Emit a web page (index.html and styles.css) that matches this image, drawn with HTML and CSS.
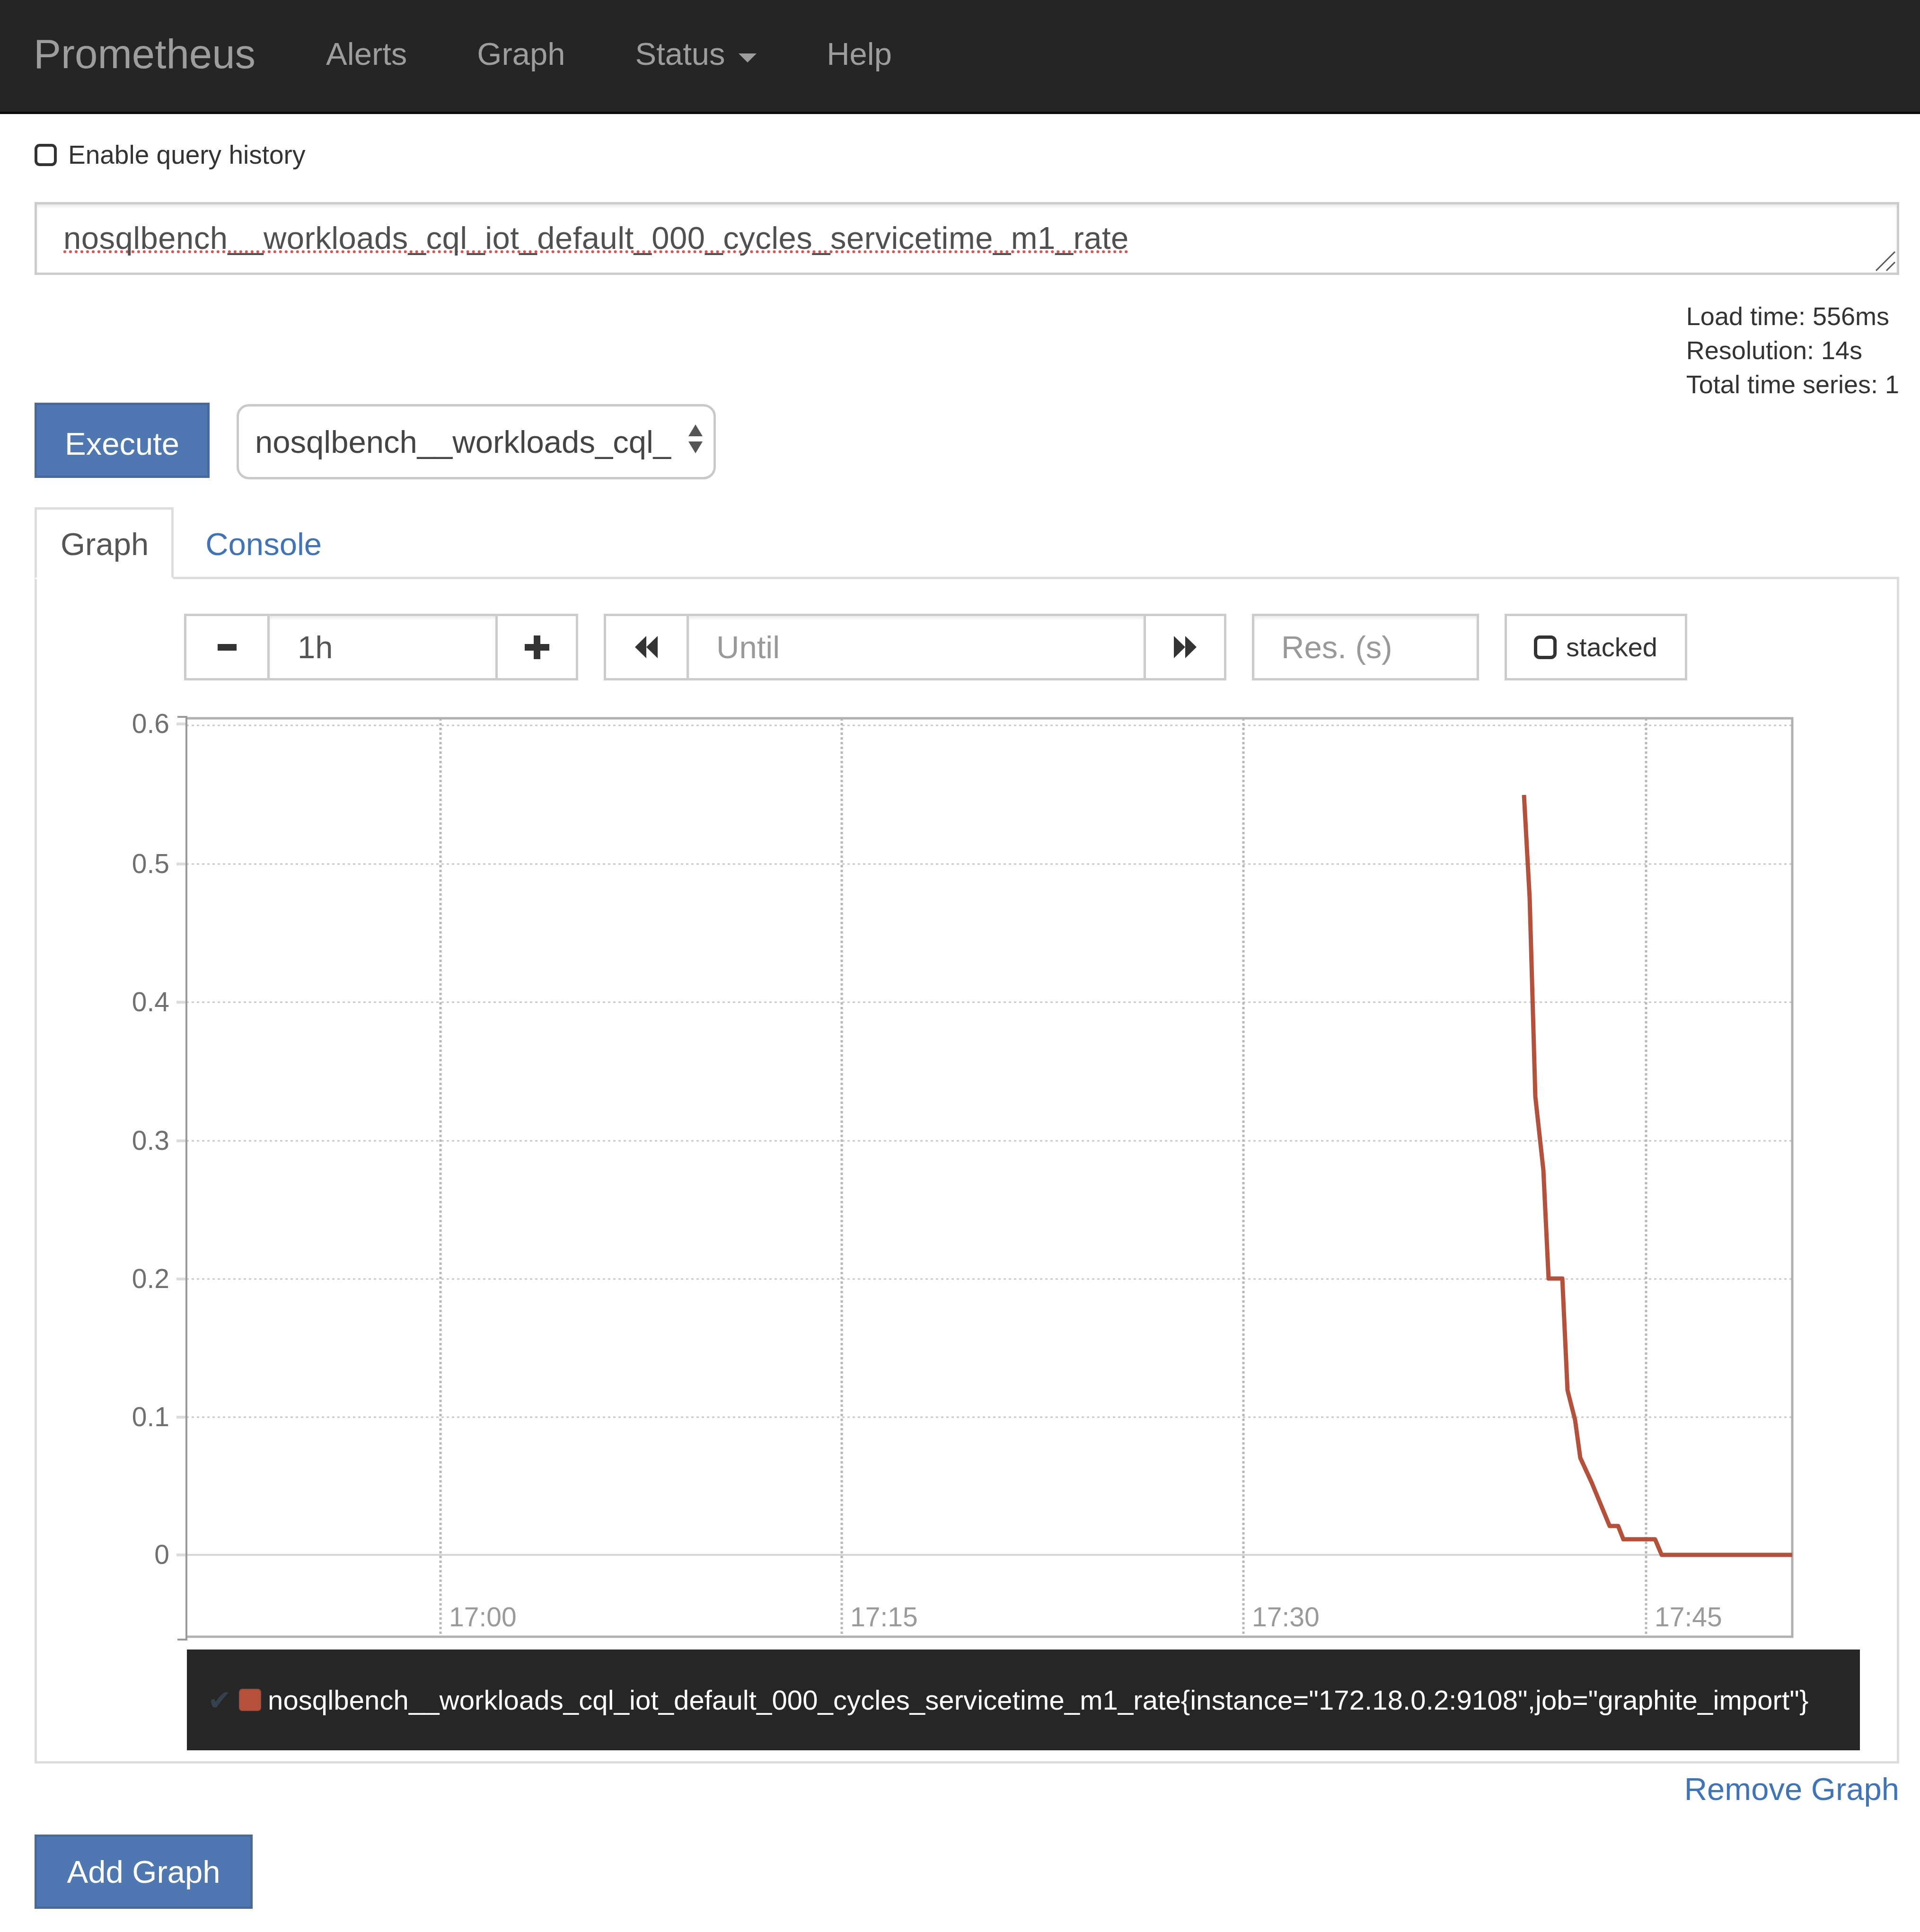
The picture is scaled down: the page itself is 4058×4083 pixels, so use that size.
FILE: index.html
```html
<!DOCTYPE html>
<html lang="en">
<head>
<meta charset="utf-8">
<title>Prometheus Time Series Collection and Processing Server</title>
<link rel="stylesheet" href="styles.css">
</head>
<body>
<nav class="navbar">
  <a class="brand">Prometheus</a>
  <ul class="nav">
    <li><a>Alerts</a></li>
    <li><a>Graph</a></li>
    <li><a>Status <span class="caret"></span></a></li>
    <li><a>Help</a></li>
  </ul>
</nav>
<main class="container">
  <label class="history"><span class="checkbox"></span>Enable query history</label>
  <div class="expr">
    <span class="spell">nosqlbench__workloads_cql_iot_default_000_cycles_servicetime_m1_rate</span>
    <svg class="resize-handle" width="48" height="48" viewBox="0 0 48 48"><path d="M6 46 L46 6 M28 46 L46 28" stroke="#555" stroke-width="3" fill="none"/></svg>
  </div>
  <div class="eval-stats">Load time: 556ms<br>Resolution: 14s<br>Total time series: 1</div>
  <div class="exec-row">
    <button class="btn-primary execute">Execute</button>
    <div class="select">
      <span>nosqlbench__workloads_cql_</span>
      <svg class="select-arrows" width="30" height="61" viewBox="0 0 30 61"><path d="M0 25 L15 0 L30 25 Z M0 36 L30 36 L15 61 Z" fill="#555"/></svg>
    </div>
  </div>
  <div class="tabs">
    <div class="tab active">Graph</div>
    <div class="tab">Console</div>
  </div>
  <div class="tab-panel">
    <div class="controls">
      <div class="group range">
        <div class="gbtn first"><svg width="40" height="14" viewBox="0 0 40 14"><rect width="40" height="14" fill="#333"/></svg></div>
        <div class="gin range-in">1h</div>
        <div class="gbtn"><svg width="52" height="50" viewBox="0 0 52 50"><rect x="19" y="0" width="14" height="50" fill="#333"/><rect x="0" y="18" width="52" height="14" fill="#333"/></svg></div>
      </div>
      <div class="group time">
        <div class="gbtn first"><svg width="48" height="47" viewBox="0 0 48 47"><path d="M0 23.5 L24 0 L24 47 Z M24 23.5 L48 0 L48 47 Z" fill="#333"/></svg></div>
        <div class="gin time-in placeholder">Until</div>
        <div class="gbtn"><svg width="48" height="47" viewBox="0 0 48 47"><path d="M48 23.5 L24 0 L24 47 Z M24 23.5 L0 0 L0 47 Z" fill="#333"/></svg></div>
      </div>
      <div class="res placeholder">Res. (s)</div>
      <div class="stacked"><span class="unchecked"></span>stacked</div>
    </div>
    <svg class="chart" width="3600" height="1985" viewBox="-100 0 3600 1985">
      <g stroke="#c8c8c8" stroke-width="3" stroke-dasharray="5 6">
        <line x1="94" x2="3488" y1="43" y2="43"/>
        <line x1="94" x2="3488" y1="336" y2="336"/>
        <line x1="94" x2="3488" y1="628" y2="628"/>
        <line x1="94" x2="3488" y1="921" y2="921"/>
        <line x1="94" x2="3488" y1="1213" y2="1213"/>
        <line x1="94" x2="3488" y1="1505" y2="1505"/>
      </g>
      <line x1="94" x2="3488" y1="1796" y2="1796" stroke="#d6d6d6" stroke-width="4"/>
      <g stroke="#b8b8b8" stroke-width="5" stroke-dasharray="5 5">
        <line x1="631" x2="631" y1="28" y2="1969"/>
        <line x1="1479" x2="1479" y1="28" y2="1969"/>
        <line x1="2328" x2="2328" y1="28" y2="1969"/>
        <line x1="3179" x2="3179" y1="28" y2="1969"/>
      </g>
      <g stroke="#dcdcdc" stroke-width="6">
        <line x1="73" x2="94" y1="40" y2="40"/>
        <line x1="73" x2="94" y1="336" y2="336"/>
        <line x1="73" x2="94" y1="628" y2="628"/>
        <line x1="73" x2="94" y1="921" y2="921"/>
        <line x1="73" x2="94" y1="1213" y2="1213"/>
        <line x1="73" x2="94" y1="1505" y2="1505"/>
        <line x1="73" x2="94" y1="1796" y2="1796"/>
      </g>
      <path d="M94 28 H3488 V1969 H94" stroke="#b0b0b0" stroke-width="5" fill="none"/>
      <path d="M75 25 H94 V1975 H75" stroke="#999" stroke-width="4" fill="none"/>
      <polyline fill="none" stroke="#b5503a" stroke-width="9" stroke-linejoin="round" points="2921,190 2933,408 2945,828 2962,983 2973,1212 3002,1212 3013,1448 3029,1511 3040,1591 3064,1643 3102,1735 3120,1735 3131,1763 3198,1763 3212,1796 3488,1796"/>
      <g class="ylab">
        <text x="58" y="59">0.6</text>
        <text x="58" y="355">0.5</text>
        <text x="58" y="647">0.4</text>
        <text x="58" y="940">0.3</text>
        <text x="58" y="1232">0.2</text>
        <text x="58" y="1524">0.1</text>
        <text x="58" y="1815">0</text>
      </g>
      <g class="xlab">
        <text x="649" y="1947">17:00</text>
        <text x="1497" y="1947">17:15</text>
        <text x="2346" y="1947">17:30</text>
        <text x="3197" y="1947">17:45</text>
      </g>
    </svg>
    <div class="legend">
      <span class="legend-check">✔</span><span class="swatch"></span><span class="series-name">nosqlbench__workloads_cql_iot_default_000_cycles_servicetime_m1_rate{instance="172.18.0.2:9108",job="graphite_import"}</span>
    </div>
  </div>
  <div class="remove-row"><a>Remove Graph</a></div>
  <button class="btn-primary add-graph">Add Graph</button>
</main>
</body>
</html>
```
FILE: styles.css
```css
* { box-sizing: border-box; }
html, body { margin: 0; padding: 0; background: #fff; }
body {
  font-family: "Liberation Sans", Arial, Helvetica, sans-serif;
  color: #333;
}

/* navbar */
.navbar {
  height: 241px;
  background: #252525;
  border-bottom: 5px solid #0a0a0a;
  display: flex;
  align-items: flex-start;
  padding: 66px 0 0 71px;
}
.brand {
  font-size: 87px;
  line-height: 96px;
  color: #9d9d9d;
  padding-right: 75px;
}
.nav { display: flex; list-style: none; margin: 0; padding: 0; }
.nav a {
  display: block;
  font-size: 67px;
  line-height: 96px;
  color: #9d9d9d;
  padding: 0 74px;
}
.caret {
  display: inline-block;
  width: 0; height: 0;
  border-top: 19px solid #9d9d9d;
  border-left: 19px solid transparent;
  border-right: 19px solid transparent;
  margin-left: 10px;
  vertical-align: 5px;
}

/* page */
.container { padding: 0 44px 0 73px; }
.history {
  display: flex;
  align-items: center;
  height: 66px;
  margin-top: 53px;
  font-size: 55px;
  line-height: 66px;
  color: #333;
}
.checkbox {
  width: 47px; height: 47px;
  border: 6px solid #333;
  border-radius: 11px;
  margin-right: 24px;
  flex: none;
}
.expr {
  position: relative;
  margin-top: 67px;
  height: 154px;
  border: 5px solid #ccc;
  box-shadow: inset 0 5px 5px rgba(0,0,0,.075);
  padding: 23px 57px 0 56px;
  font-size: 67px;
  line-height: 96px;
  color: #505050;
  white-space: nowrap;
  letter-spacing: 0.47px;
}
.spell {
  text-decoration: underline dotted #e0504f;
  text-decoration-thickness: 6px;
  text-underline-offset: 3px;
  text-decoration-skip-ink: none;
}
.resize-handle { position: absolute; right: 2px; bottom: 2px; }
.eval-stats {
  width: max-content;
  margin: 51px 0 0 auto;
  font-size: 54px;
  line-height: 72px;
  color: #333;
}
.exec-row { display: flex; align-items: flex-start; margin-top: 3px; }
.btn-primary {
  background: #4f78b2;
  border: 5px solid #48699b;
  color: #fff;
  font-family: inherit;
  font-size: 67px;
  line-height: 96px;
  border-radius: 0;
  padding: 0;
  display: block;
}
.execute { width: 370px; height: 159px; padding-top: 14px; }
.select {
  margin-left: 57px;
  margin-top: 3px;
  width: 1013px;
  height: 159px;
  border: 5px solid #c9c9c9;
  border-radius: 26px;
  display: flex;
  align-items: center;
  padding-left: 34px;
  font-size: 67px;
  line-height: 96px;
  color: #444;
  background: #fff;
}
.select-arrows { margin-left: auto; margin-right: 23px; align-self: flex-start; margin-top: 38px; }

/* tabs */
.tabs { display: flex; margin-top: 59px; border-bottom: 5px solid #ddd; }
.tab {
  font-size: 67px;
  line-height: 96px;
  padding: 25px 48px 21px 50px;
  border: 5px solid transparent;
  margin-bottom: -5px;
  margin-right: 12px;
  color: #3f74b8;
}
.tab.active { border-color: #ddd; border-bottom-color: #fff; background: #fff; color: #555; }
.tab-panel {
  border: 5px solid #ddd;
  border-top: none;
  padding: 73px 0 23px 0;
}

/* controls */
.controls { display: flex; margin-left: 311px; height: 141px; }
.group { display: flex; border: 5px solid #ccc; height: 141px; background: #fff; }
.group.time { margin-left: 54px; }
.gbtn { width: 165px; display: flex; align-items: center; justify-content: center; }
.gbtn.first { width: 171px; }
.time .gbtn.first { width: 170px; }
.gin {
  border-left: 5px solid #ccc;
  border-right: 5px solid #ccc;
  box-shadow: inset 0 5px 5px rgba(0,0,0,.075);
  display: flex;
  align-items: center;
  font-size: 67px;
  color: #555;
}
.range-in { width: 487px; padding-left: 59px; }
.time-in { width: 971px; padding-left: 58px; }
.placeholder { color: #999; }
.res {
  margin-left: 54px;
  width: 480px;
  height: 141px;
  border: 5px solid #ccc;
  box-shadow: inset 0 5px 5px rgba(0,0,0,.075);
  display: flex;
  align-items: center;
  padding-left: 57px;
  font-size: 67px;
}
.stacked {
  margin-left: 54px;
  width: 386px;
  height: 141px;
  border: 5px solid #ccc;
  display: flex;
  align-items: center;
  padding-left: 57px;
  font-size: 56px;
  color: #333;
}
.unchecked {
  width: 48px; height: 50px;
  border: 7px solid #333;
  border-radius: 12px;
  margin-right: 20px;
  flex: none;
}

/* chart */
.chart { display: block; margin: 52px 0 0 122px; }
.chart text { font-family: "Liberation Sans", Arial, sans-serif; font-size: 57px; }
.ylab text { fill: #707070; text-anchor: end; }
.xlab text { fill: #9a9a9a; }
.legend {
  margin: 11px 0 0 317px;
  width: 3536px;
  height: 213px;
  background: #262626;
  display: flex;
  align-items: center;
  padding-left: 44px;
  white-space: nowrap;
}
.legend-check {
  font-family: "DejaVu Sans", sans-serif;
  font-size: 60px;
  color: #34414f;
  width: 66px;
}
.swatch {
  width: 47px; height: 47px;
  background: #b5503a;
  border: 2px solid #a44733;
  border-radius: 7px;
  margin-right: 14px;
  flex: none;
}
.series-name { color: #fff; font-size: 58px; line-height: 70px; letter-spacing: 0.12px; }

.remove-row { text-align: right; margin-top: 6px; font-size: 67px; line-height: 96px; }
.remove-row a { color: #3f74b8; }
.add-graph { margin-top: 48px; width: 461px; height: 157px; }
```
